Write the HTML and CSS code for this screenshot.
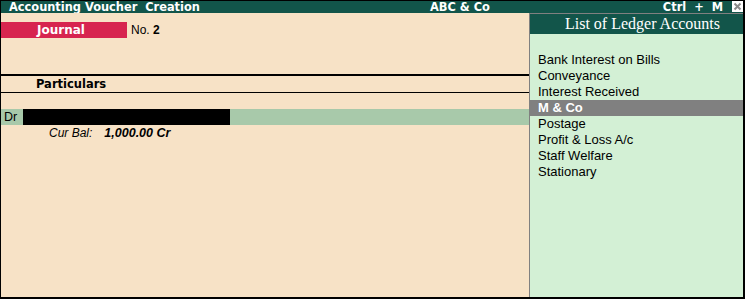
FILE: index.html
```html
<!DOCTYPE html>
<html>
<head>
<meta charset="utf-8">
<link rel="stylesheet" href="styles.css">
</head>
<body>
<div class="window">
  <div class="titlebar">
    <span class="t-left">Accounting Voucher&nbsp; Creation</span>
    <span class="t-mid">ABC &amp; Co</span>
    <span class="t-right">Ctrl + M</span>
    <span class="close"><svg width="11" height="11" viewBox="0 0 11 11"><path d="M2.5 2.5 L8.5 8.5 M8.5 2.5 L2.5 8.5" stroke="#8a8a8a" stroke-width="2" fill="none"/></svg></span>
  </div>
  <div class="main">
    <div class="left">
      <div class="voucher-row">
        <span class="vtype">Journal</span>
        <span class="vno">No. <b>2</b></span>
      </div>
      <div class="head-row"><span class="particulars">Particulars</span></div>
      <div class="entry-row">
        <span class="dr">Dr</span>
        <span class="ledger-input"></span>
      </div>
      <div class="curbal">Cur Bal:<b class="amount">1,000.00 Cr</b></div>
    </div>
    <div class="panel">
      <div class="panel-head">List of Ledger Accounts</div>
      <ul class="ledger-list">
        <li>Bank Interest on Bills</li>
        <li>Conveyance</li>
        <li>Interest Received</li>
        <li class="selected">M &amp; Co</li>
        <li>Postage</li>
        <li>Profit &amp; Loss A/c</li>
        <li>Staff Welfare</li>
        <li>Stationary</li>
      </ul>
    </div>
  </div>
</div>
</body>
</html>
```

FILE: styles.css
```css
html, body {
  margin: 0;
  padding: 0;
  background: #ffffff;
}
.window {
  width: 742px;
  height: 296px;
  border-top: 1px solid #000;
  border-left: 1px solid #000;
  border-right: 2px solid #000;
  border-bottom: 2px solid #000;
  display: flex;
  flex-direction: column;
  font-family: "Liberation Sans", Arial, sans-serif;
  overflow: hidden;
}
.titlebar {
  height: 12px;
  background: #12554a;
  color: #fff;
  font-family: "DejaVu Sans", sans-serif;
  font-weight: bold;
  font-size: 11.4px;
  line-height: 12px;
  display: grid;
  grid-template-columns: 421px 1fr auto 11px;
  padding-left: 8px;
  flex: none;
}
.t-left { white-space: nowrap; }
.t-mid { white-space: nowrap; }
.t-right { white-space: nowrap; margin-right: 9px; word-spacing: 4px; }
.close {
  width: 11px;
  height: 11px;
  background: #fff;
  display: block;
}
.close svg { display: block; }
.main {
  flex: 1;
  display: flex;
}
.left {
  width: 528px;
  background: #f7e2c6;
  flex: none;
}
.voucher-row {
  margin-top: 9px;
  height: 16px;
  display: flex;
  align-items: center;
  font-size: 12px;
}
.vtype {
  width: 90px;
  height: 16px;
  background: #d7244f;
  color: #fff;
  font-family: "DejaVu Sans", sans-serif;
  font-weight: bold;
  padding-left: 36px;
  line-height: 16px;
  font-size: 12px;
}
.vno {
  margin-left: 4px;
  color: #000;
}
.head-row {
  margin-top: 36px;
  border-top: 2px solid #000;
  border-bottom: 1px solid #000;
  height: 16px;
  line-height: 16px;
  font-family: "DejaVu Sans", sans-serif;
  font-size: 11.5px;
  font-weight: bold;
  padding-left: 35px;
}
.entry-row {
  margin-top: 16px;
  height: 16px;
  display: flex;
  background: #a8c9aa;
}
.dr {
  width: 22px;
  line-height: 16px;
  font-size: 12.5px;
  padding-left: 3px;
  box-sizing: border-box;
}
.ledger-input {
  width: 207px;
  background: #000;
}
.curbal {
  height: 16px;
  line-height: 16px;
  padding-left: 48px;
  font-size: 12px;
  font-style: italic;
}
.amount {
  margin-left: 12px;
  font-size: 12.5px;
}
.panel {
  flex: 1;
  border-left: 1px solid #808080;
  border-top: 1px solid #808080;
  background: #d3f0d5;
}
.panel-head {
  height: 20px;
  background: #12554a;
  color: #fff;
  font-family: "Liberation Serif", "Times New Roman", serif;
  font-size: 16px;
  line-height: 20px;
  text-align: center;
  padding-left: 12px;
}
.ledger-list {
  list-style: none;
  margin: 18px 0 0 0;
  padding: 0;
  font-size: 13px;
}
.ledger-list li {
  height: 16px;
  line-height: 16px;
  padding-left: 8px;
}
.ledger-list li.selected {
  background: #808080;
  color: #fff;
  font-weight: bold;
}
```
